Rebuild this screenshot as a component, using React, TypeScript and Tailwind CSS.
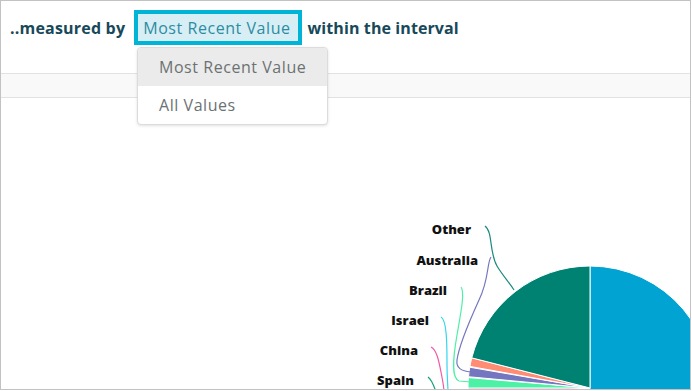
import React from "react";

const CX = 589;
const CY = 388;
const R = 122;

type Slice = { from: number; to: number; color: string };

// angles in degrees, 0 = 12 o'clock, clockwise positive
const slices: Slice[] = [
  { from: 0, to: 200, color: "#00a3d1" },
  { from: 200, to: 262, color: "#d9f3ee" },
  { from: 262, to: 266, color: "#35d6ee" },
  { from: 266, to: 270, color: "#ee5aa4" },
  { from: 270, to: 274.9, color: "#4cf1a5" },
  { from: 275.3, to: 279.8, color: "#7476c0" },
  { from: 280.2, to: 284.3, color: "#ff8c73" },
  { from: 284.3, to: 360, color: "#008273" },
];

function pt(angle: number, r: number) {
  const a = (angle * Math.PI) / 180;
  return [CX + r * Math.sin(a), CY - r * Math.cos(a)];
}

function arcPath(s: Slice) {
  const [x1, y1] = pt(s.from, R);
  const [x2, y2] = pt(s.to, R);
  const large = s.to - s.from > 180 ? 1 : 0;
  return `M${CX},${CY} L${x1},${y1} A${R},${R} 0 ${large} 1 ${x2},${y2} Z`;
}

const labels = [
  { text: "Other", x: 470, y: 234 },
  { text: "Australia", x: 477, y: 265 },
  { text: "Brazil", x: 446, y: 295 },
  { text: "Israel", x: 428, y: 325 },
  { text: "China", x: 417, y: 355 },
  { text: "Spain", x: 413, y: 385 },
];

const leaders = [
  { d: "M484,226 C492,232 488,252 496,266 C502,276 508,282 513,290", color: "#1a8a7e" },
  { d: "M490,257 C486,262 488,280 478,300 C468,322 458,345 456,360 C455,368 460,371 470,372", color: "#7476c0" },
  { d: "M460,287 C464,292 460,312 456,335 C452,358 450,378 458,381 L470,382", color: "#4cf1a5" },
  { d: "M440,317 C446,320 446,345 446,365 C446,378 447,386 447,392", color: "#35d6ee" },
  { d: "M430,347 C436,350 438,362 440,372 C442,382 443,388 443,392", color: "#ee5aa4" },
  { d: "M427,377 C431,380 433,386 435,392", color: "#1aa17a" },
];

function PieChart() {
  return (
    <svg className="block" width="692" height="293" viewBox="0 98 692 293">
      {slices.map((s, i) => (
        <path key={i} d={arcPath(s)} fill={s.color} stroke="#ffffff" strokeWidth={1} />
      ))}
      {leaders.map((l, i) => (
        <path key={i} d={l.d} fill="none" stroke={l.color} strokeWidth={1.2} />
      ))}
      {labels.map((l) => (
        <text
          key={l.text}
          x={l.x}
          y={l.y}
          textAnchor="end"
          fontFamily="'Open Sans', 'Noto Sans', sans-serif"
          fontWeight={800}
          fontSize={13}
          fill="#111111"
        >
          {l.text}
        </text>
      ))}
    </svg>
  );
}

export default function App() {
  return (
    <div className="relative h-[390px] w-[691px] overflow-hidden border border-[#c2c2c2] bg-white font-['Open_Sans','Noto_Sans',sans-serif]">
      <div className="flex h-[72px] items-start pl-[9px] pt-[9px]">
        <span className="mt-[6px] text-[16px] font-bold tracking-[0.2px] text-[#17495a]">..measured by</span>
        <span className="ml-[9px] flex h-[35px] items-center border-4 border-[#00b4d8] bg-[#d8eef5] pl-[5px] pr-[7px] text-[16px] tracking-[0.55px] text-[#2b8ca3]">
          Most Recent Value
        </span>
        <span className="ml-[6px] mt-[6px] text-[16px] font-bold tracking-[0.1px] text-[#17495a]">within the interval</span>
      </div>
      <div className="h-[25px] border-y border-[#e2e2e2] bg-[#f9f9f9]" />
      <PieChart />

      <div className="absolute left-[136px] top-[46px] w-[191px] overflow-hidden rounded-[4px] border border-[#dcdcdc] bg-white text-[16px] tracking-[0.55px] text-[#6b7272] shadow-[0_1px_3px_rgba(0,0,0,0.12)]">
        <div className="flex h-[38px] items-center bg-[#ebebeb] pl-[21px]">Most Recent Value</div>
        <div className="flex h-[38px] items-center pl-[21px]">All Values</div>
      </div>
    </div>
  );
}
